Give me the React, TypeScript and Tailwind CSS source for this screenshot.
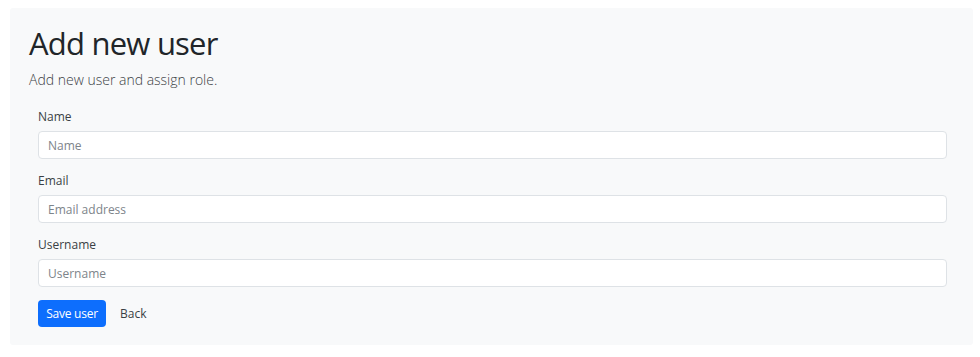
import React from 'react';

const fields = [
  { label: 'Name', placeholder: 'Name', type: 'text' },
  { label: 'Email', placeholder: 'Email address', type: 'email' },
  { label: 'Username', placeholder: 'Username', type: 'text' },
];

const App: React.FC = () => {
  return (
    <div className="min-h-screen bg-white pt-[8px] pl-[10px] pr-[7px] font-['Open_Sans',sans-serif] text-[#212529]">
      <div className="bg-[#f8f9fa] rounded-[3px] pt-[16px] pb-[18px] pl-[19px] pr-[26px]">
        <h1 className="text-[31px] leading-[38px] font-medium tracking-[-0.025em] mb-[6px]">Add new user</h1>
        <p className="text-[14px] leading-[23px] font-light text-[#3d4246] mt-[1px]">Add new user and assign role.</p>

        <form className="pl-[9px] mt-[17px]" onSubmit={(e) => e.preventDefault()}>
          {fields.map((f) => (
            <div key={f.label} className="mb-[13px]">
              <label className="block text-[12px] leading-[18px] mb-[5px] text-[#3a3f44]">{f.label}</label>
              <input
                type={f.type}
                placeholder={f.placeholder}
                className="block w-full h-[28px] px-[9px] text-[12px] bg-white border border-[#dee2e6] rounded-[4px] placeholder:text-[#7d848a] outline-none"
              />
            </div>
          ))}

          <div className="flex items-center">
            <button type="submit" className="h-[27px] w-[68px] rounded-[4px] bg-[#0d6efd] text-white text-[12px] tracking-[-0.02em]">
              Save user
            </button>
            <button type="button" className="ml-[14px] text-[12px] text-[#3a3f44]">
              Back
            </button>
          </div>
        </form>
      </div>
    </div>
  );
};

export default App;
